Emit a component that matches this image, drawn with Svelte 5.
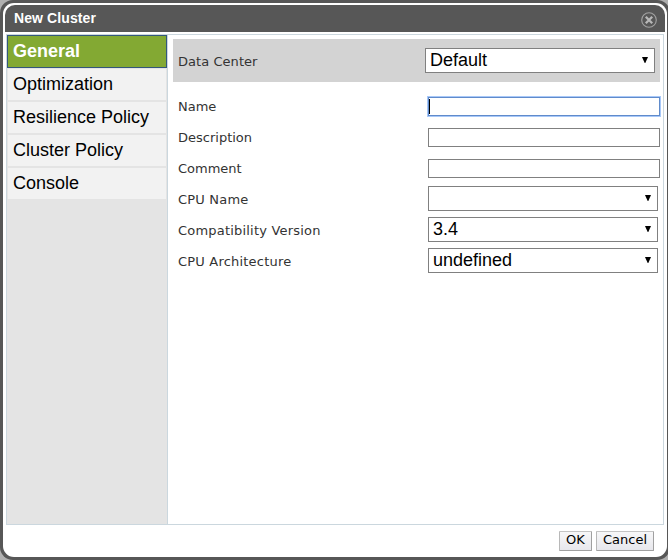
<script>
  const tabs = ['General', 'Optimization', 'Resilience Policy', 'Cluster Policy', 'Console'];
  const rows = [
    { label: 'Name', kind: 'input', focused: true },
    { label: 'Description', kind: 'input' },
    { label: 'Comment', kind: 'input' },
    { label: 'CPU Name', kind: 'select', value: '' },
    { label: 'Compatibility Version', kind: 'select', value: '3.4' },
    { label: 'CPU Architecture', kind: 'select', value: 'undefined' }
  ];
  let active = $state('General');
</script>

{#snippet dropdown(value)}
  <div class="select">
    <span>{value}</span>
    <svg width="6" height="6" viewBox="0 0 6 6"><path d="M0 0h6L3.3 6h-.6z" /></svg>
  </div>
{/snippet}

<div class="backdrop">
  <div class="dialog">
    <div class="inner">
      <header>
        <span>New Cluster</span>
        <svg width="16" height="16" viewBox="0 0 16 16" fill="none">
          <circle cx="8" cy="8" r="7.3" stroke="#a2a2a2" stroke-width="1.1" />
          <path d="M4.8 4.8l6.4 6.4M11.2 4.8l-6.4 6.4" stroke="#b8b8b8" stroke-width="2.3" />
        </svg>
      </header>
      <main>
        <nav>
          {#each tabs as tab}
            <button class="tab" class:active={tab === active} onclick={() => (active = tab)}>{tab}</button>
          {/each}
        </nav>
        <section>
          <div class="center">
            <span class="label">Data Center</span>
            {@render dropdown('Default')}
          </div>
          <div class="form">
            {#each rows as row}
              <div class="row {row.kind}-row">
                <span class="label">{row.label}</span>
                {#if row.kind === 'input'}
                  <div class="input" class:focused={row.focused}></div>
                {:else}
                  {@render dropdown(row.value)}
                {/if}
              </div>
            {/each}
          </div>
        </section>
      </main>
      <footer>
        <button class="ok">OK</button>
        <button class="cancel">Cancel</button>
      </footer>
    </div>
  </div>
</div>

<style>
  :global(body) { margin: 0; overflow: hidden; }
  .backdrop, .backdrop * { box-sizing: border-box; }
  .backdrop { width: 668px; height: 560px; background: #b0b0b0; overflow: hidden; }
  .dialog {
    width: 670px; height: 560px; padding: 3px;
    background: #575757; border-radius: 13px;
  }
  .inner {
    width: 664px; height: 554px; background: #fff; border-radius: 11px;
    padding: 2px; display: flex; flex-direction: column;
  }
  header {
    height: 27px; flex: none; background: #575757; border-radius: 10px 10px 0 0;
    display: flex; justify-content: space-between; align-items: center;
    padding: 0 8px 0 9px; color: #fff; letter-spacing: 0.1px;
    font: bold 14px/27px "Liberation Sans", Arial, sans-serif;
  }
  header svg { margin-top: 3px; }
  main {
    width: 658px; height: 491px; flex: none; margin: 2px 0 0 1px;
    border: 1px solid #cbd7de; display: flex;
  }
  nav { width: 161px; flex: none; background: #e4e4e4; border-right: 1px solid #cbd7de; display: flex; flex-direction: column; }
  .tab {
    height: 33px; margin: 0; padding: 0 0 1px 5px; text-align: left;
    border: 1px solid #e4e4e4; background: #f2f2f2; color: #000;
    font: 18px/30px "Liberation Sans", Arial, sans-serif;
  }
  .tab.active { background: #83a933; border-color: #33577b; color: #fff; font-weight: bold; }
  section { flex: 1; padding: 4px 3px 0 5px; }
  .center {
    height: 43px; background: #d3d3d3; display: flex; align-items: center;
    justify-content: space-between; padding: 0 5px;
  }
  .label { color: #333; font: 13px/17px "DejaVu Sans", sans-serif; white-space: nowrap; }
  .center .label { margin-top: 2px; letter-spacing: 0.05px; }
  .form { padding: 9px 0 0 5px; }
  .row { height: 31px; display: flex; align-items: center; }
  .row .label { width: 250px; }
  .select-row .label { letter-spacing: 0.2px; }
  .select-row .select { margin-bottom: 2px; }
  .input { width: 232px; height: 19px; border: 1px solid #808080; background: #fff; }
  .input.focused { border-color: #608bcb; box-shadow: 0 0 0 1px #a8c8f8; padding: 1px 0 0; }
  .input.focused::before { content: ''; display: block; width: 1px; height: 15px; background: #000; }
  .select {
    width: 230px; height: 25px; border: 1px solid #808080; background: #fff; color: #000;
    display: flex; justify-content: space-between; align-items: flex-start;
    padding: 0 6px 0 4px; font: 18px/20px "Liberation Sans", Arial, sans-serif;
  }
  .select span { margin-top: 1px; }
  .select svg { margin-top: 8px; }
  footer { flex: 1; display: flex; justify-content: flex-end; align-items: flex-start; gap: 4px; padding: 6px 11px 0 0; }
  footer button {
    height: 20px; padding: 0 0 2px; border: 1px solid; border-color: #c4c4c4 #a0a0a0 #a0a0a0 #b8b8b8;
    border-radius: 1px; background: linear-gradient(#f7f7f8, #e7e7ec); color: #000;
    font: 13px/16px "DejaVu Sans", sans-serif;
  }
  .ok { width: 33px; }
  .cancel { width: 58px; }
</style>
